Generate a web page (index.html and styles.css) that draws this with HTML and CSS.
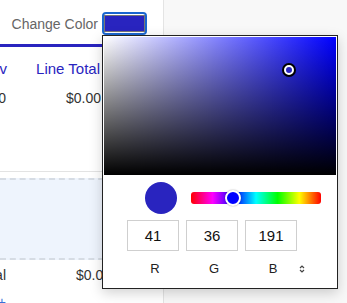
FILE: index.html
```html
<!DOCTYPE html>
<html lang="en">
<head>
<meta charset="utf-8">
<title>Change Color</title>
<link rel="stylesheet" href="styles.css">
</head>
<body>
<div class="app">
  <section class="panel">
    <div class="toolbar">
      <span class="toolbar-label">Change Color</span>
      <button class="swatch" type="button"><span class="swatch-fill"></span></button>
    </div>
    <div class="accent"></div>
    <div class="table">
      <div class="row row-head"><span>Rev</span><span>Line Total</span></div>
      <div class="row row-item"><span>1.0</span><span>$0.00</span></div>
    </div>
    <div class="divider"></div>
    <div class="dropzone"></div>
    <div class="table">
      <div class="row row-total"><span>Total</span><span>$0.00</span></div>
      <div class="row row-add"><span>+</span></div>
    </div>
  </section>
  <aside class="side"></aside>

  <div class="picker">
    <div class="sat"><span class="sat-marker"></span></div>
    <div class="controls">
      <span class="preview"></span>
      <div class="hue"><span class="hue-thumb"></span></div>
    </div>
    <div class="fields">
      <span class="field">41</span>
      <span class="field">36</span>
      <span class="field">191</span>
    </div>
    <div class="labels">
      <span class="label">R</span>
      <span class="label">G</span>
      <span class="label">B</span>
      <svg class="format-toggle" width="6" height="10" viewBox="0 0 6 10"><path d="M1 4 L3 2 L5 4 M1 6 L3 8 L5 6" fill="none" stroke="#444" stroke-width="1.2"/></svg>
    </div>
  </div>
</div>
</body>
</html>
```

FILE: styles.css
```css
* { box-sizing: border-box; margin: 0; padding: 0; }
html, body { width: 347px; height: 303px; overflow: hidden; }
body { font-family: "Liberation Sans", Arial, sans-serif; background: #fff; }

.app { position: relative; display: flex; height: 303px; }

.panel { width: 164px; flex: none; background: #fff; border-right: 1px solid #e4e4e4; overflow: hidden; }
.side { flex: 1; background: #f8f8f8; }

.toolbar { height: 44px; padding: 3px 16px 0 0; display: flex; align-items: center; justify-content: flex-end; gap: 4px; }
.toolbar-label { font-size: 14px; line-height: 16px; color: #666; white-space: nowrap; }
.swatch { appearance: none; display: block; width: 45px; height: 23px; border: 2px solid #1a66cf; border-radius: 4px; background: #fff; padding: 1px 0; cursor: pointer; }
.swatch-fill { display: block; height: 100%; border: 1px solid #767676; background: #2924bf; }

.accent { height: 3px; background: #2924bf; }

.table { margin-left: -40px; }
.row { display: grid; grid-template-columns: 47px 93px; font-size: 14px; line-height: 18px; color: #333; }
.row span { text-align: right; white-space: nowrap; }
.row-head { padding: 13px 0 11px; font-size: 15px; color: #2924bf; }
.row-item { grid-template-columns: 46px 95px; }
.row-total { grid-template-columns: 46px 105px; padding-top: 6px; }
.row-add { grid-template-columns: 46px; margin-top: 9px; color: #3a6fd8; }

.divider { height: 1px; background: #e3e3e3; margin-top: 64px; }
.dropzone { margin-top: 6px; height: 82px; background: #eef4fd; border-top: 2px dashed #d6dce4; border-bottom: 2px dashed #d6dce4; }

.picker { position: absolute; left: 102px; top: 35px; width: 236px; height: 254px; border: 1px solid #222; background: #fff; box-shadow: 0 4px 12px rgba(0,0,0,0.18); padding: 1px; display: flex; flex-direction: column; }

.sat { position: relative; height: 138px; flex: none; background: linear-gradient(to top, #000, rgba(0,0,0,0)), linear-gradient(to right, #fff, #00f); }
.sat-marker { position: absolute; left: 180px; top: 28px; width: 10px; height: 10px; border-radius: 50%; border: 2px solid #fff; background: #2924bf; box-shadow: 0 0 0 2px #000; }

.controls { display: flex; align-items: center; gap: 14px; margin-top: 7px; padding-left: 41px; }
.preview { width: 32px; height: 32px; border-radius: 50%; background: #2924bf; flex: none; }
.hue { position: relative; width: 130px; height: 12px; border-radius: 3px; background: linear-gradient(to right, #f00, #f0f, #00f, #0ff, #0f0, #ff0, #f00); }
.hue-thumb { position: absolute; left: 34px; top: -2px; width: 16px; height: 16px; border-radius: 50%; border: 2px solid #fff; background: #00f; box-shadow: 0 0 1.5px rgba(0,0,0,0.45); }

.fields { display: flex; gap: 7px; margin-top: 6px; padding-left: 23px; }
.field { width: 52px; height: 31px; border: 1px solid #cfcfcf; font-size: 15px; color: #111; display: flex; align-items: center; justify-content: center; }

.labels { display: flex; align-items: center; gap: 7px; margin-top: 10px; padding-left: 25px; font-size: 13px; line-height: 16px; color: #222; }
.label { width: 52px; text-align: center; }
.format-toggle { margin-left: -7px; }
```
